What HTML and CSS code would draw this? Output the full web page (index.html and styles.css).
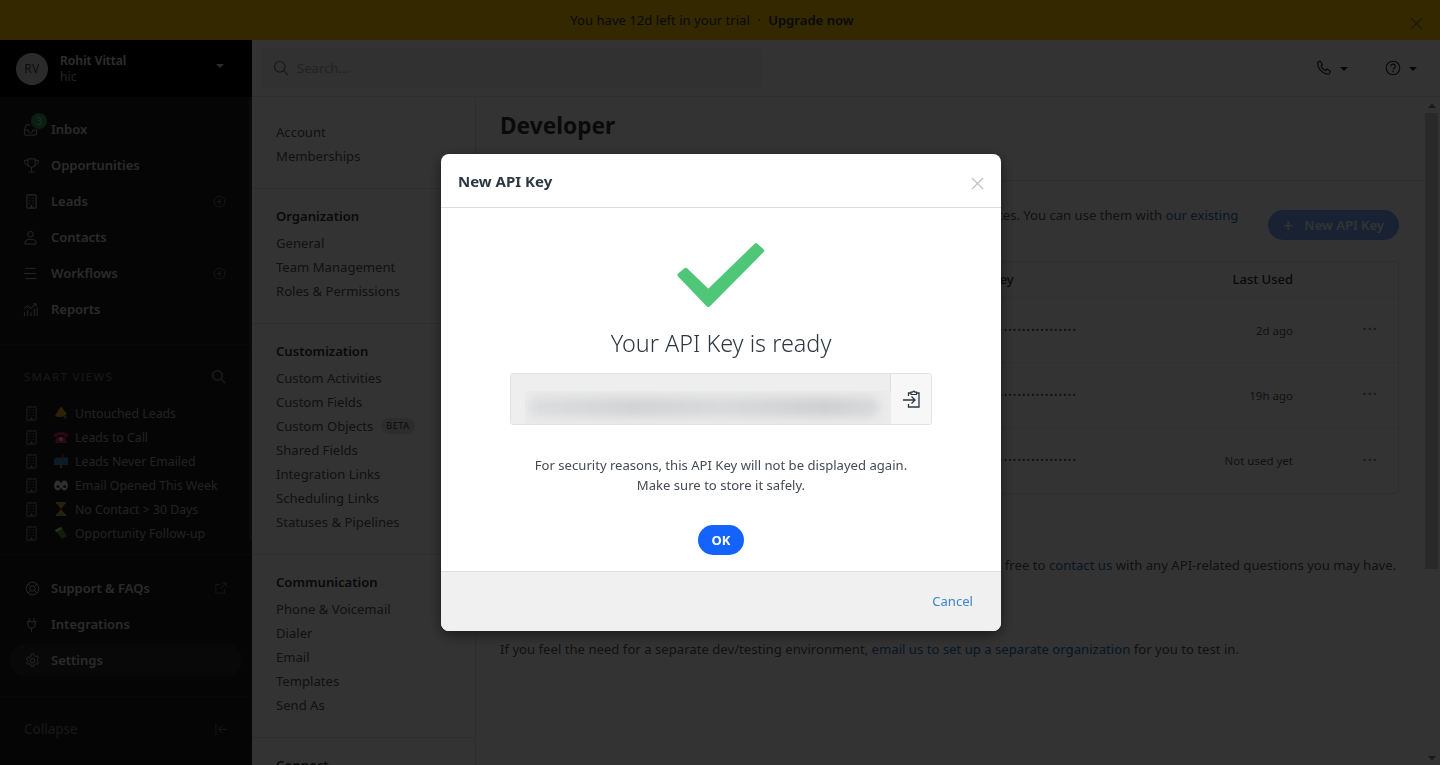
FILE: index.html
```html
<!DOCTYPE html>
<html lang="en">
<head>
<meta charset="utf-8">
<title>Developer</title>
<link rel="stylesheet" href="styles.css">
</head>
<body>
<svg class="defs" width="0" height="0" aria-hidden="true">
  <symbol id="building" viewBox="0 0 12 16"><rect x="1" y=".8" width="10" height="14.400" rx="1.200" fill="none" stroke="currentColor" stroke-width="1.200"/><path d="M3.500 3.500h1.200v1.200H3.500zM7.300 3.500h1.200v1.200H7.300zM3.500 6.500h1.200v1.200H3.500zM7.300 6.500h1.200v1.200H7.300zM3.500 9.500h1.200v1.200H3.500zM7.300 9.500h1.200v1.200H7.300zM5 12h2v3H5z" fill="currentColor"/></symbol>
  <symbol id="plus-circle" viewBox="0 0 14 14"><circle cx="7" cy="7" r="5.800" fill="none" stroke="currentColor"/><path d="M7 4.200v5.600M4.200 7h5.600" stroke="currentColor"/></symbol>
</svg>
<div class="app">
  <div class="banner">
    <span class="banner-text">You have 12d left in your trial <span class="banner-dot">·</span> <b>Upgrade now</b></span>
    <svg class="banner-close" viewBox="0 0 14 14"><path d="M1 1l12 12M13 1L1 13" stroke="currentColor" stroke-width="1.300"/></svg>
  </div>
  <div class="shell">
    <aside class="sidebar">
      <div class="account">
        <div class="avatar">RV</div>
        <div class="account-text"><div class="account-name">Rohit Vittal</div><div class="account-org">hic</div></div>
        <span class="caret"></span>
      </div>
      <div class="side-body">
        <nav class="side-nav">
          <a class="side-item">
            <span class="side-icon inbox-icon">
              <svg viewBox="0 0 16 16" width="15" height="15"><path d="M1.500 8.500V13a1 1 0 0 0 1 1h11a1 1 0 0 0 1-1V8.500M1.500 8.500L3.500 3H8M1.500 8.500H5.500c0 2 1 3 2.500 3s2.500-1 2.500-3h4" fill="none" stroke="currentColor"/></svg>
              <span class="badge">3</span>
            </span>Inbox</a>
          <a class="side-item"><span class="side-icon"><svg viewBox="0 0 18 18" width="17" height="17"><path d="M5 2h8v5a4 4 0 0 1-8 0zM5 3.500H1.500c0 3 1.500 5 4 5.500M13 3.500h3.500c0 3-1.500 5-4 5.500M9 11v4M6 16h6" fill="none" stroke="currentColor"/></svg></span>Opportunities</a>
          <a class="side-item"><span class="side-icon"><svg width="11" height="15" class="icon-nudge"><use href="#building"/></svg></span>Leads<svg class="side-add" width="13" height="13"><use href="#plus-circle"/></svg></a>
          <a class="side-item"><span class="side-icon"><svg viewBox="0 0 16 16" width="15" height="15"><circle cx="8" cy="4.500" r="3" fill="none" stroke="currentColor"/><path d="M2 15v-1.500a4 4 0 0 1 4-3.500h4a4 4 0 0 1 4 3.500V15z" fill="none" stroke="currentColor"/></svg></span>Contacts</a>
          <a class="side-item"><span class="side-icon"><svg viewBox="0 0 16 14" width="15" height="13"><path d="M2.500 1.500h11M1 7h13M2.500 12.500h12" fill="none" stroke="currentColor"/></svg></span>Workflows<svg class="side-add" width="13" height="13"><use href="#plus-circle"/></svg></a>
          <a class="side-item"><span class="side-icon"><svg viewBox="0 0 16 16" width="15" height="15"><path d="M1.500 15v-4M5 15V9M8.500 15v-4M12 15V7M15 15V6M1 7l4-3 3 3 6-5M11 2h3v3" fill="none" stroke="currentColor"/></svg></span>Reports</a>
        </nav>
        <div class="views">
          <div class="views-head"><span>SMART VIEWS</span><svg viewBox="0 0 16 16" width="15" height="15"><circle cx="6.800" cy="6.800" r="5" fill="none" stroke="currentColor" stroke-width="2"/><path d="M10.500 10.500L15 15" stroke="currentColor" stroke-width="2"/></svg></div>
          <a class="view-item"><svg class="view-bld" width="11" height="15"><use href="#building"/></svg><svg class="view-emo" viewBox="0 0 14 14"><path d="M1 10L6 1.500l1.500-.5L13 8c-3 3-8 4-12 2z" fill="#e8a92e"/><circle cx="11" cy="11" r="1.600" fill="#b47a18"/></svg>Untouched Leads</a>
          <a class="view-item"><svg class="view-bld" width="11" height="15"><use href="#building"/></svg><svg class="view-emo" viewBox="0 0 14 14"><path d="M0 5c2-4 12-4 14 0v2h-3l-1-2H4L3 7H0zM3 7h8l2 6H1z" fill="#e0245e"/><circle cx="7" cy="9" r="2" fill="#f3c0d0"/></svg>Leads to Call</a>
          <a class="view-item"><svg class="view-bld" width="11" height="15"><use href="#building"/></svg><svg class="view-emo" viewBox="0 0 14 14"><path d="M0 7a3.500 3.500 0 0 1 3.500-3.500H14V11H0z" fill="#3b88c3"/><path d="M8.500 0h1.200v6H8.500z" fill="#dd2e44"/><path d="M6 11h2v3H6z" fill="#888"/></svg>Leads Never Emailed</a>
          <a class="view-item"><svg class="view-bld" width="11" height="15"><use href="#building"/></svg><svg class="view-emo" viewBox="0 0 14 14"><ellipse cx="3.700" cy="7.500" rx="3.500" ry="5" fill="#eee"/><ellipse cx="10.300" cy="7.500" rx="3.500" ry="5" fill="#eee"/><circle cx="4" cy="8.500" r="1.600" fill="#333"/><circle cx="10.600" cy="8.500" r="1.600" fill="#333"/></svg>Email Opened This Week</a>
          <a class="view-item"><svg class="view-bld" width="11" height="15"><use href="#building"/></svg><svg class="view-emo" viewBox="0 0 14 14"><path d="M2 0h10v2H2zM2 12h10v2H2z" fill="#8aa"/><path d="M3 2h8L7 7l4 5H3l4-5z" fill="#f4900c"/></svg>No Contact &gt; 30 Days</a>
          <a class="view-item"><svg class="view-bld" width="11" height="15"><use href="#building"/></svg><svg class="view-emo" viewBox="0 0 14 14"><path d="M1 4l6-3 6 9-5 3z" fill="#5c913b"/><path d="M1 4l6-3 1 2-6 3z" fill="#d0e8b0"/></svg>Opportunity Follow-up</a>
        </div>
        <div class="side-lower">
          <a class="side-item"><span class="side-icon"><svg viewBox="0 0 16 16" width="15" height="15"><circle cx="8" cy="8" r="6.800" fill="none" stroke="currentColor"/><circle cx="8" cy="8" r="2.800" fill="none" stroke="currentColor"/><path d="M3.200 3.200l2.800 2.800M12.800 3.200L10 6M3.200 12.800L6 10M12.800 12.800L10 10" stroke="currentColor"/></svg></span>Support &amp; FAQs<svg class="side-add" viewBox="0 0 14 14" width="12" height="12"><path d="M11 8v5H1V3h5M8 1h5v5M13 1L6 8" fill="none" stroke="currentColor"/></svg></a>
          <a class="side-item"><span class="side-icon"><svg viewBox="0 0 14 16" width="13" height="15"><path d="M4.500 1v4M9.500 1v4M2 5h10M3 5v3a4 4 0 0 0 8 0V5M7 12v4" fill="none" stroke="currentColor"/></svg></span>Integrations</a>
          <a class="side-item side-active"><span class="side-icon"><svg viewBox="0 0 16 16" width="15" height="15"><path d="M6.600 1h2.800l.4 2 1.400.8 1.900-.7 1.400 2.400-1.500 1.300v1.600l1.500 1.300-1.400 2.400-1.900-.7-1.400.8-.4 2H6.600l-.4-2-1.400-.8-1.900.7L1.500 10.700 3 9.400V7.800L1.500 6.500l1.400-2.400 1.900.7 1.400-.8z" fill="none" stroke="currentColor" stroke-linejoin="round"/><circle cx="8" cy="8.100" r="2.400" fill="none" stroke="currentColor"/></svg></span>Settings</a>
        </div>
        <div class="collapse"><span>Collapse</span><svg viewBox="0 0 14 14" width="13" height="13"><path d="M1 1v12M13 7H4M8 3L4 7l4 4" fill="none" stroke="currentColor"/></svg></div>
      </div>
    </aside>
    <div class="main">
      <header class="topbar">
        <div class="search">
          <svg viewBox="0 0 16 16" width="16" height="16"><circle cx="6.800" cy="6.800" r="5.300" fill="none" stroke="currentColor" stroke-width="1.200"/><path d="M10.700 10.700L15 15" stroke="currentColor" stroke-width="1.200"/></svg>
          <span>Search...</span>
        </div>
        <div class="top-actions">
          <span class="top-action"><svg viewBox="0 0 16 16" width="16" height="16"><path d="M1.500 2.500l2.500-1.500 2.500 3.500-1.500 1.500c.8 2 2.200 3.500 4.500 4.500l1.500-1.500 3.500 2.500-1.500 2.500c-6 .5-12-6-11-11z" fill="none" stroke="currentColor" stroke-width="1.100"/></svg><span class="caret"></span></span>
          <span class="top-action"><svg viewBox="0 0 16 16" width="16" height="16"><circle cx="8" cy="8" r="6.800" fill="none" stroke="currentColor" stroke-width="1.100"/><path d="M5.800 6.300a2.200 2.200 0 1 1 3.300 1.900c-.8.400-1.100.9-1.100 1.600" fill="none" stroke="currentColor" stroke-width="1.100"/><circle cx="8" cy="11.600" r=".8" fill="currentColor"/></svg><span class="caret"></span></span>
        </div>
      </header>
      <div class="workspace">
        <nav class="settings-nav">
          <section class="set-group">
            <a class="set-link">Account</a><a class="set-link">Memberships</a>
          </section>
          <section class="set-group">
            <h4>Organization</h4>
            <a class="set-link">General</a><a class="set-link">Team Management</a><a class="set-link">Roles &amp; Permissions</a>
          </section>
          <section class="set-group">
            <h4>Customization</h4>
            <a class="set-link">Custom Activities</a><a class="set-link">Custom Fields</a><a class="set-link">Custom Objects <span class="beta">BETA</span></a><a class="set-link">Shared Fields</a><a class="set-link">Integration Links</a><a class="set-link">Scheduling Links</a><a class="set-link">Statuses &amp; Pipelines</a>
          </section>
          <section class="set-group">
            <h4>Communication</h4>
            <a class="set-link">Phone &amp; Voicemail</a><a class="set-link">Dialer</a><a class="set-link">Email</a><a class="set-link">Templates</a><a class="set-link">Send As</a>
          </section>
          <section class="set-group">
            <h4>Connect</h4>
          </section>
        </nav>
        <main class="content">
          <div class="content-head"><h1>Developer</h1></div>
          <div class="content-body">
            <div class="intro">
              <p class="intro-text">API keys let you connect your accounts to all of your other tools, scripts and services. You can use them with <a class="link">our existing</a></p>
              <button class="new-key"><span class="new-plus">+</span>New API Key</button>
            </div>
            <div class="table">
              <div class="row row-head"><span></span><span>API Key</span><span class="col-used">Last Used</span><span></span></div>
              <div class="row"><span></span><span class="key-dots">••••••••••••••••••••••••</span><span class="col-used">2d ago</span><span class="more">•••</span></div>
              <div class="row"><span></span><span class="key-dots">••••••••••••••••••••••••</span><span class="col-used">19h ago</span><span class="more">•••</span></div>
              <div class="row"><span></span><span class="key-dots">••••••••••••••••••••••••</span><span class="col-used">Not used yet</span><span class="more">•••</span></div>
            </div>
            <p class="para para-one">Take a look at our API documentation to get going with the basics and please feel free to <a class="link">contact us</a> with any API-related questions you may have.</p>
            <p class="para para-two">If you feel the need for a separate dev/testing environment, <a class="link">email us to set up a separate organization</a> for you to test in.</p>
          </div>
        </main>
        <div class="scrollbar">
          <span class="arrow-up"></span>
          <span class="thumb"></span>
          <span class="arrow-down"></span>
        </div>
      </div>
    </div>
  </div>
</div>
<div class="overlay">
  <div class="modal">
    <div class="modal-head">
      <h3>New API Key</h3>
      <svg class="modal-close" viewBox="0 0 14 14"><path d="M1 1l12 12M13 1L1 13" stroke="currentColor" stroke-width="1.500"/></svg>
    </div>
    <div class="modal-body">
      <svg class="check" viewBox="0 0 88 66"><polygon points="2.500,33 8.700,27.800 31.300,49.500 79,3.200 85.200,8.700 31.300,63" fill="#4fc678" stroke="#4fc678" stroke-width="4" stroke-linejoin="round"/></svg>
      <h2>Your API Key is ready</h2>
      <div class="key-box">
        <div class="key-input"><div class="key-mask"><span class="key-blur"></span></div></div>
        <div class="key-copy"><svg viewBox="0 0 17 18" width="17" height="18"><path d="M5.500 6V3H8M13.500 3H16v14H5.500v-3" fill="none" stroke="#2d3742" stroke-width="1.300"/><path d="M8 4.500V2.200h1.700a1.100 1.100 0 0 1 2.200 0h1.600v2.300z" fill="none" stroke="#2d3742" stroke-width="1.200"/><path d="M0 10h12M8.500 6.500L12 10l-3.500 3.500" fill="none" stroke="#2d3742" stroke-width="1.300"/></svg></div>
      </div>
      <p class="notice">For security reasons, this API Key will not be displayed again.<br>Make sure to store it safely.</p>
      <button class="ok">OK</button>
    </div>
    <div class="modal-foot"><a class="cancel">Cancel</a></div>
  </div>
</div>
</body>
</html>
```

FILE: styles.css
```css
* { box-sizing: border-box; }
html, body { margin: 0; height: 100%; overflow: hidden; }
body { font-family: "Noto Sans", "Open Sans", sans-serif; font-size: 13.100px; color: #4a5568; background: #fff; }
.defs { position: absolute; }
.app { display: flex; flex-direction: column; height: 765px; }

.banner { height: 40px; flex: none; background: #ffc900; color: #333; display: flex; align-items: center; justify-content: center; position: relative; padding-right: 16px; font-size: 13.100px; }
.banner-dot { margin: 0 4px; }
.banner b { font-weight: 600; }
.banner-close { position: absolute; right: 17px; top: 17px; width: 13px; height: 13px; color: #8a7000; }

.shell { flex: 1; display: flex; min-height: 0; }
.sidebar { width: 252px; flex: none; background: #1c1c1c; color: #dcdcdc; display: flex; flex-direction: column; }
.account { height: 57px; flex: none; background: #000; display: flex; align-items: center; padding: 0 16px; }
.avatar { width: 32px; height: 32px; border-radius: 50%; background: #d8d8d8; color: #444; display: flex; align-items: center; justify-content: center; font-size: 12px; letter-spacing: .3px; }
.account-text { margin-left: 12px; flex: 1; }
.account-name { font-weight: 600; font-size: 12.200px; line-height: 16px; color: #e6e6e6; }
.account-org { font-size: 12.200px; line-height: 16px; color: #aaa; }
.caret { display: inline-block; width: 0; height: 0; border-left: 4px solid transparent; border-right: 4px solid transparent; border-top: 4px solid currentColor; }
.account .caret { margin-right: 12px; color: #ddd; margin-top: -6px; }

.side-body { flex: 1; display: flex; flex-direction: column; min-height: 0; position: relative; }
.side-body::after { content: ""; position: absolute; top: 0; right: 0; width: 3px; height: 443px; background: #333; }
.side-nav { padding: 14px 0 17px; border-bottom: 1px solid #2a2a2a; }
.side-item { display: flex; align-items: center; height: 36px; font-size: 13px; font-weight: 600; padding-left: 23px; color: #d2d2d2; }
.side-icon { width: 28px; flex: none; display: flex; align-items: center; position: relative; color: #c4c4c4; }
.icon-nudge { margin-left: 3px; }
.badge { position: absolute; left: 8px; top: -9px; width: 16px; height: 16px; border-radius: 50%; background: #2b9a58; color: #a8e0be; font-size: 10px; font-weight: 400; display: flex; align-items: center; justify-content: center; }
.side-add { margin-left: auto; margin-right: 26px; color: #777; }

.views { padding: 21px 0 10px; border-bottom: 1px solid #2a2a2a; height: 210px; }
.views-head { display: flex; align-items: center; justify-content: space-between; padding: 0 26px 0 24px; height: 20px; font-size: 11.500px; letter-spacing: 1.300px; color: #777; margin-bottom: 15px; }
.view-item { display: flex; align-items: center; height: 24px; padding-left: 26px; color: #a8a8a8; font-size: 12.300px; }
.view-bld { color: #888; flex: none; }
.view-emo { width: 14px; height: 14px; margin: 0 7px 0 17px; flex: none; }

.side-lower { padding: 15px 0 2px; border-bottom: 1px solid #2a2a2a; height: 142px; }
.side-lower .side-item { padding-left: 25px; }
.side-lower .side-add { margin-right: 25px; }
.side-lower .side-icon { width: 26px; }
.side-active { background: #2a2a2a; border-radius: 16px; margin: 2px 10px; height: 32px; padding-left: 15px !important; }
.collapse { display: flex; align-items: center; justify-content: space-between; padding: 0 24px; height: 64px; color: #777; font-size: 13.500px; }

.main { flex: 1; display: flex; flex-direction: column; min-width: 0; background: #fff; }
.topbar { height: 57px; flex: none; background: #fff; display: flex; align-items: center; justify-content: space-between; padding: 0 23px 0 9px; border-bottom: 1px solid #eaeaea; }
.search { width: 501px; height: 40px; border-radius: 6px; background: #f2f2f2; display: flex; align-items: center; padding-left: 12px; gap: 8px; color: #777; }
.search span { color: #aaa; }
.top-actions { display: flex; gap: 37px; }
.top-action { display: flex; align-items: center; gap: 8px; color: #222; }
.top-action .caret { margin-top: 2px; }

.workspace { flex: 1; display: flex; min-height: 0; }
.settings-nav { width: 224px; flex: none; border-right: 1px solid #e4e4e4; overflow: hidden; background: #fff; }
.set-group { padding: 19px 0 20px 24px; border-bottom: 1px solid #e4e4e4; }
.set-group:first-child { padding-top: 23px; }
.set-group:last-child { border-bottom: 0; }
.set-group h4 { margin: 0 0 7px; height: 16px; line-height: 16px; font-size: 13.100px; font-weight: 600; color: #333; }
.set-link { display: flex; align-items: center; gap: 8px; height: 24px; color: #555; }
.beta { background: #e0e0e0; color: #333; font-size: 9.200px; letter-spacing: .5px; line-height: 16px; padding: 0 5px; border-radius: 8px; }

.content { flex: 1; min-width: 0; background: #fff; overflow: hidden; }
.content-head { height: 84px; border-bottom: 1px solid #e4e4e4; padding: 12px 24px 0; }
.content-head h1 { margin: 0; font-size: 22.700px; line-height: 33px; font-weight: 700; color: #333; }
.content-body { padding: 24px 25px 0 24px; }
.intro { display: flex; justify-content: space-between; align-items: flex-start; height: 40px; }
.intro-text { margin: 0; width: 745px; line-height: 20px; color: #555; }
.link { color: #2a6fb0; }
.new-key { margin-top: 5px; height: 30px; width: 131px; border: 0; border-radius: 15px; background: #1463ff; color: #fff; font: 600 13px "Noto Sans", sans-serif; display: flex; align-items: center; justify-content: center; gap: 11px; opacity: .55; }
.new-plus { font-size: 18px; font-weight: 400; line-height: 1; }
.table { margin-top: 16px; border: 1px solid #e4e4e4; border-radius: 4px; }
.row { display: grid; grid-template-columns: 466px 190px 136px 1fr; align-items: center; height: 65.330px; border-top: 1px solid #eee; font-size: 11.500px; color: #555; }
.row-head { height: 35px; border-top: 0; padding-bottom: 2px; font-size: 13px; color: #333; font-weight: 500; }
.col-used { text-align: right; }
.key-dots { font-size: 9px; letter-spacing: 1.200px; white-space: nowrap; margin-top: -2px; }
.more { font-size: 9.500px; text-align: center; letter-spacing: 1.600px; padding-left: 50px; margin-top: -3px; color: #777; }
.para { margin: 0; line-height: 20px; color: #555; white-space: nowrap; font-size: 13.150px; }
.para-one { margin-top: 61px; }
.para-two { margin-top: 64px; }

.scrollbar { width: 16px; flex: none; background: #fff; display: flex; flex-direction: column; align-items: center; padding: 0 2px 0 1px; }
.arrow-up { width: 0; height: 0; border: 4px solid transparent; border-top: 0; border-bottom: 5px solid #888; margin: 6px 0 5px; }
.thumb { width: 13px; height: 456px; background: #cdcdcd; }
.arrow-down { width: 0; height: 0; border: 4px solid transparent; border-bottom: 0; border-top: 5px solid #888; margin-top: auto; margin-bottom: 4px; }

.overlay { position: fixed; inset: 0; background: rgba(0, 0, 0, .8); display: flex; justify-content: center; align-items: flex-start; padding: 154px 0 0 2px; }
.modal { width: 560px; height: 477px; background: #fff; border-radius: 8px; box-shadow: 0 4px 14px rgba(0, 0, 0, .5); display: flex; flex-direction: column; overflow: hidden; }
.modal-head { height: 54px; flex: none; border-bottom: 1px solid #ddd; display: flex; align-items: center; justify-content: space-between; padding: 0 17px 0 17px; }
.modal-head h3 { margin: 0; font-size: 15px; font-weight: 700; color: #2d3742; }
.modal-close { width: 13px; height: 13px; color: #c4c4c4; margin-top: 5px; }
.modal-body { flex: 1; display: flex; flex-direction: column; align-items: center; min-height: 0; }
.check { width: 88px; height: 66px; margin-top: 34px; flex: none; }
.modal-body h2 { margin: 18px 0 0; font-size: 23.400px; line-height: 34px; font-weight: 300; color: #2d3742; }
.key-box { width: 422px; height: 52px; margin-top: 13px; flex: none; border: 1px solid #e2e2e2; border-radius: 3px; display: flex; overflow: hidden; }
.key-input { width: 380px; background: #eee; padding: 17px 0 0 14px; border-right: 1px solid #ddd; flex: none; }
.key-mask { height: 34px; overflow: hidden; background: #ebebeb; margin-right: -1px; }
.key-blur { display: block; height: 20px; margin: 6px 12px 0 4px; background: linear-gradient(90deg, #dcdddf, #d2d3d5 30%, #d8d9db 55%, #cfd0d2 85%, #d8d9db); border-radius: 8px; filter: blur(5px); }
.key-copy { flex: 1; background: #f7f7f7; display: flex; align-items: center; justify-content: center; }
.notice { margin: 30px 0 0; line-height: 20px; text-align: center; color: #444b55; }
.ok { margin-top: 30px; width: 46px; height: 30px; border: 0; border-radius: 15px; background: #1463ff; color: #fff; font: 700 13px "Noto Sans", sans-serif; padding: 0; }
.modal-foot { height: 60px; flex: none; border-top: 1px solid #ddd; background: #f0f0f0; display: flex; align-items: center; justify-content: flex-end; padding: 0 28px 2px; }
.cancel { color: #3d85c6; }
```
